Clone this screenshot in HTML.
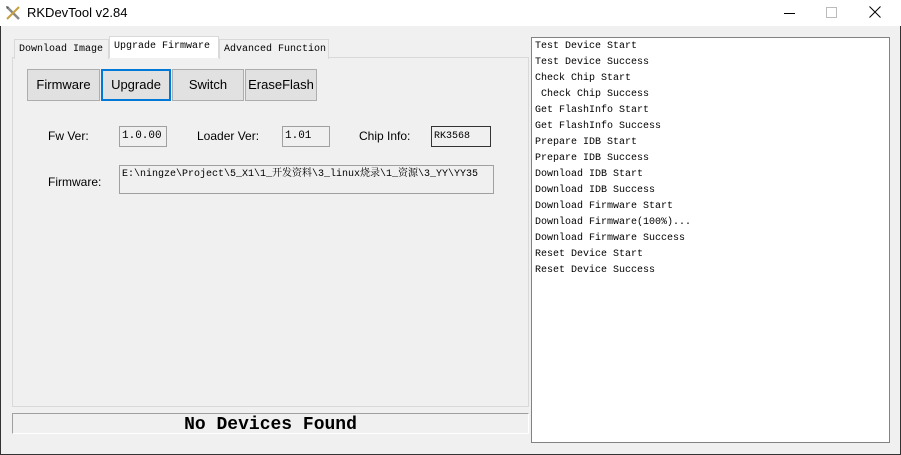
<!DOCTYPE html>
<html><head><meta charset="utf-8"><style>
*{margin:0;padding:0;box-sizing:border-box}
body{width:901px;height:455px;background:#f0f0f0;position:relative;overflow:hidden;font-family:"Liberation Sans",Arial,sans-serif;font-size:12px;color:#000}
.abs{position:absolute}
.win{position:absolute;left:0;top:0;width:901px;height:455px;border:1px solid #333;border-top:none}
.title{position:absolute;left:0;top:0;width:901px;height:26px;background:#fff}
.tab{position:absolute;height:20px;border:1px solid #d9d9d9;border-bottom:none;background:#f0f0f0;font-family:"Liberation Mono",monospace;font-size:10px;line-height:19px;padding-left:4px;white-space:nowrap}
.btn{position:absolute;top:69px;height:32px;background:#e1e1e1;border:1px solid #adadad;font-size:13px;text-align:center;line-height:30px}
.fld{position:absolute;height:21px;border:1px solid #a0a0a0;background:#f0f0f0;font-family:"Liberation Mono",monospace;font-size:11px;line-height:19px;padding-left:2px;white-space:nowrap;overflow:hidden}
.lbl{position:absolute;font-size:12px}
.log{position:absolute;left:531px;top:37px;width:359px;height:406px;background:#fff;border:1px solid #828282;padding:1px 0 0 3px;font-family:"Liberation Mono",monospace;font-size:10px;line-height:16px;white-space:pre}
</style></head><body>
<div class="win"></div>
<div class="title"></div>
<svg class="abs" style="left:5px;top:5px" width="16" height="16" viewBox="0 0 16 16"><path d="M2 2 L14 14" stroke="#888" stroke-width="2.5"/><path d="M14 2 L2 14" stroke="#c8a040" stroke-width="2"/><path d="M1 1 L4 2 L2 4 Z" fill="#555"/></svg>
<div class="abs" style="left:27px;top:5px;font-size:13px;font-family:'Liberation Sans',sans-serif">RKDevTool v2.84</div>
<div class="abs" style="left:784px;top:13px;width:11px;height:1px;background:#000"></div>
<div class="abs" style="left:826px;top:7px;width:11px;height:11px;border:1px solid #bbb"></div>
<svg class="abs" style="left:869px;top:6px" width="12" height="12"><path d="M0.5 0.5L11.5 11.5M11.5 0.5L0.5 11.5" stroke="#000" stroke-width="1"/></svg>

<div class="abs" style="left:12px;top:57px;width:517px;height:350px;border:1px solid #d9d9d9"></div>
<div class="tab" style="left:14px;top:39px;width:95px">Download Image</div>
<div class="tab" style="left:219px;top:39px;width:110px">Advanced Function</div>
<div class="tab" style="left:109px;top:36px;width:110px;height:22px;background:#fff;line-height:20px">Upgrade Firmware</div>

<div class="btn" style="left:27px;width:73px">Firmware</div>
<div class="btn" style="left:101px;width:70px;border:2px solid #0078d7;line-height:28px">Upgrade</div>
<div class="btn" style="left:172px;width:72px">Switch</div>
<div class="btn" style="left:245px;width:72px">EraseFlash</div>

<div class="lbl" style="left:48px;top:129px">Fw Ver:</div>
<div class="fld" style="left:119px;top:126px;width:48px">1.0.00</div>
<div class="lbl" style="left:197px;top:129px">Loader Ver:</div>
<div class="fld" style="left:282px;top:126px;width:48px">1.01</div>
<div class="lbl" style="left:359px;top:129px">Chip Info:</div>
<div class="fld" style="left:431px;top:126px;width:60px;border-color:#333;font-size:10px">RK3568</div>
<div class="lbl" style="left:48px;top:175px">Firmware:</div>
<div class="fld" style="left:119px;top:165px;width:375px;height:29px;line-height:18px;font-size:10px;font-family:'Liberation Mono','Noto Serif CJK SC',monospace">E:\ningze\Project\5_X1\1_开发资料\3_linux烧录\1_资源\3_YY\YY35</div>

<div class="abs" style="left:12px;top:413px;width:517px;height:21px;border-top:1px solid #a0a0a0;border-left:1px solid #a0a0a0;border-bottom:1px solid #fff;border-right:1px solid #fff"></div>
<div class="abs" style="left:12px;top:414px;width:517px;text-align:center;font-family:'Liberation Mono',monospace;font-weight:bold;font-size:18px;line-height:22px">No Devices Found</div>

<div class="log">Test Device Start
Test Device Success
Check Chip Start
 Check Chip Success
Get FlashInfo Start
Get FlashInfo Success
Prepare IDB Start
Prepare IDB Success
Download IDB Start
Download IDB Success
Download Firmware Start
Download Firmware(100%)...
Download Firmware Success
Reset Device Start
Reset Device Success</div>
</body></html>
